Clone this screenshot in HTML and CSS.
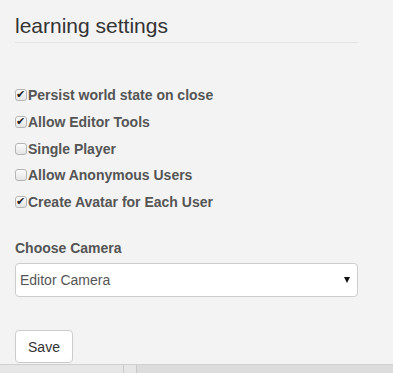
FILE: index.html
```html
<!DOCTYPE html>
<html lang="en">

<head>
  <meta charset="UTF-8">
  <meta name="viewport" content="width=device-width, initial-scale=1.0">
  <title>Learning Settings</title>
  <link rel="stylesheet" href="styles.css">
</head>

<body>
  <div class="panel">
    <h3 class="title">learning settings</h3>

    <div class="options">
      <label class="option"><input type="checkbox" checked>Persist world state on close</label>
      <label class="option"><input type="checkbox" checked>Allow Editor Tools</label>
      <label class="option"><input type="checkbox">Single Player</label>
      <label class="option"><input type="checkbox">Allow Anonymous Users</label>
      <label class="option"><input type="checkbox" checked>Create Avatar for Each User</label>
    </div>

    <label class="field-label" for="camera">Choose Camera</label>
    <div class="select-wrap">
      <select id="camera" class="select">
        <option>Editor Camera</option>
        <option>Avatar Camera</option>
      </select>
    </div>

    <button class="btn">Save</button>
  </div>

  <div class="scrollbar">
    <div class="thumb"></div>
    <div class="thumb-end"></div>
  </div>
</body>

</html>
```

FILE: styles.css
```css
html,
body {
  margin: 0;
  background: #f3f3f3;
}

body {
  font-family: "Liberation Sans", Arial, sans-serif;
  color: #333;
}

.panel {
  padding: 15px 35px 0 15px;
}

.title {
  margin: 0;
  padding-bottom: 5px;
  font-size: 21px;
  font-weight: normal;
  line-height: 22px;
  border-bottom: 1px solid #e3e3e3;
}

.options {
  margin-top: 39px;
}

.option {
  display: flex;
  align-items: center;
  height: 26.7px;
  font-size: 14px;
  font-weight: bold;
  color: #555;
}

.option input {
  appearance: none;
  -webkit-appearance: none;
  position: relative;
  width: 12px;
  height: 12px;
  margin: 0 1px 0 0;
  border: 1px solid #b5b5b5;
  border-radius: 3px;
  background: linear-gradient(#fbfbfb, #e4e4e4);
}

.option input:checked::after {
  content: "✔";
  position: absolute;
  left: 0;
  top: -2px;
  font-size: 11px;
  color: #222;
}

.field-label {
  display: block;
  margin-top: 25px;
  font-size: 14px;
  line-height: 16px;
  font-weight: bold;
  color: #555;
}

.select-wrap {
  position: relative;
  margin-top: 7px;
}

.select-wrap::after {
  content: "";
  position: absolute;
  right: 8px;
  top: 14px;
  border-left: 3px solid transparent;
  border-right: 3px solid transparent;
  border-top: 6px solid #111;
}

.select {
  appearance: none;
  -webkit-appearance: none;
  display: block;
  width: 100%;
  height: 34px;
  padding: 0 4px;
  font-family: inherit;
  font-size: 14px;
  color: #555;
  background: #fff;
  border: 1px solid #ccc;
  border-radius: 4px;
}

.btn {
  display: block;
  margin-top: 33px;
  width: 58px;
  height: 33px;
  font-family: inherit;
  font-size: 14px;
  color: #333;
  background: #fff;
  border: 1px solid #ccc;
  border-radius: 4px;
}

.scrollbar {
  display: flex;
  height: 9px;
  margin-top: 1px;
  background: #dcdcdc;
  border-top: 1px solid #d0d0d0;
}

.thumb {
  width: 123px;
  background: #e6e6e6;
  border-right: 1px solid #c8c8c8;
}

.thumb-end {
  width: 12px;
  background: #e6e6e6;
  border-right: 1px solid #c8c8c8;
}
```
